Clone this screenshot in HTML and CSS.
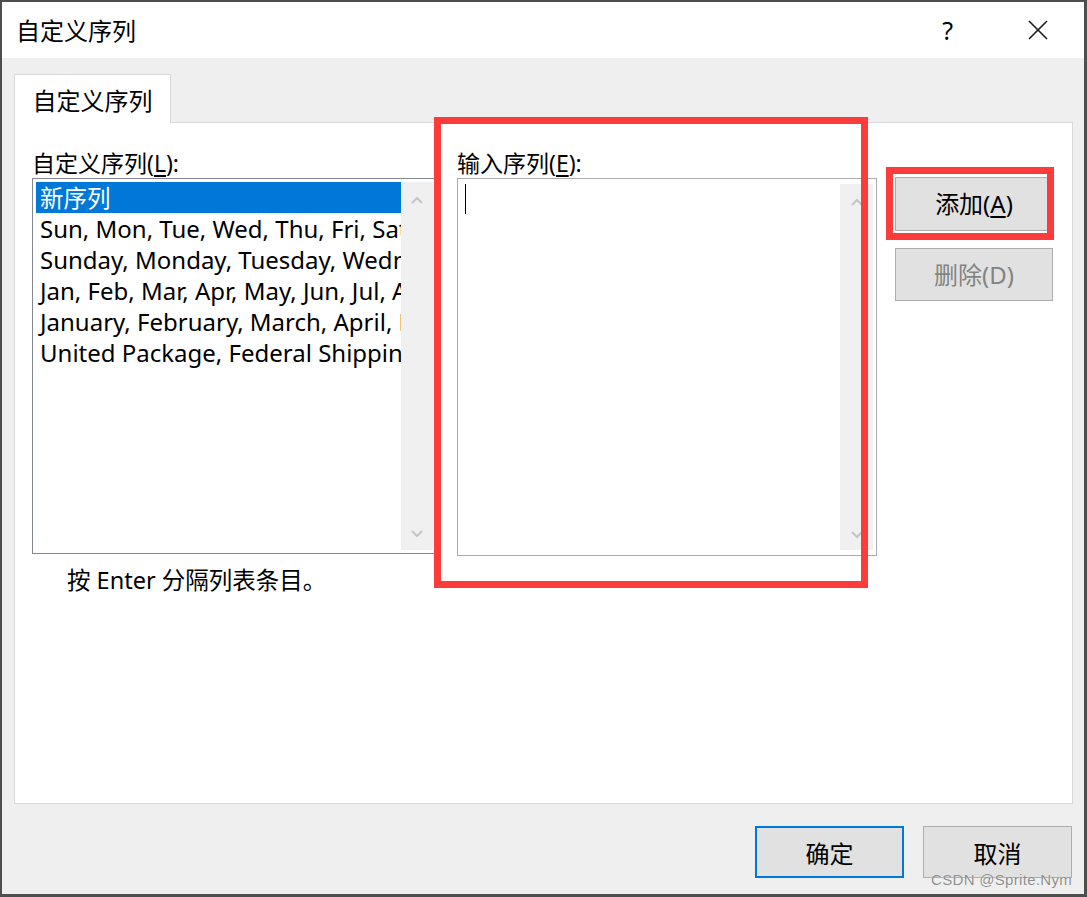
FILE: index.html
```html
<!DOCTYPE html>
<html lang="zh-CN">
<head>
<meta charset="utf-8">
<title>自定义序列</title>
<link rel="stylesheet" href="styles.css">
</head>
<body>
<div class="dialog">
  <div class="titlebar">
    <span class="title">自定义序列</span>
    <span class="help">?</span>
    <span class="close"><svg width="20" height="20" viewBox="0 0 20 20"><path d="M1 1 L19 19 M19 1 L1 19" stroke="#1a1a1a" stroke-width="1.6" fill="none"/></svg></span>
  </div>
  <div class="body">
    <div class="tabs"><div class="tab">自定义序列</div></div>
    <div class="panel">
      <div class="col col-list">
        <div class="label">自定义序列(<u>L</u>):</div>
        <div class="listbox">
          <div class="items">
            <div class="item selected">新序列</div>
            <div class="item">Sun, Mon, Tue, Wed, Thu, Fri, Sat</div>
            <div class="item">Sunday, Monday, Tuesday, Wednesday, Thursday</div>
            <div class="item">Jan, Feb, Mar, Apr, May, Jun, Jul, Aug</div>
            <div class="item">January, February, March, April, May</div>
            <div class="item">United Package, Federal Shipping</div>
          </div>
          <div class="scrollbar">
            <svg width="12" height="8" viewBox="0 0 12 8"><path d="M1 7 L6 2 L11 7" stroke="#c6c6c6" stroke-width="2.2" fill="none"/></svg>
            <svg width="12" height="8" viewBox="0 0 12 8"><path d="M1 1 L6 6 L11 1" stroke="#c6c6c6" stroke-width="2.2" fill="none"/></svg>
          </div>
        </div>
        <div class="hint">按 Enter 分隔列表条目。</div>
      </div>
      <div class="col col-input">
        <div class="label">输入序列(<u>E</u>):</div>
        <div class="textbox">
          <div class="text-area"><span class="caret"></span></div>
          <div class="scrollbar tb-scroll">
            <svg width="12" height="8" viewBox="0 0 12 8"><path d="M1 7 L6 2 L11 7" stroke="#c6c6c6" stroke-width="2.2" fill="none"/></svg>
            <svg width="12" height="8" viewBox="0 0 12 8"><path d="M1 1 L6 6 L11 1" stroke="#c6c6c6" stroke-width="2.2" fill="none"/></svg>
          </div>
        </div>
      </div>
      <div class="col col-buttons">
        <button class="btn side-btn">添加(<u>A</u>)</button>
        <button class="btn side-btn disabled">删除(D)</button>
      </div>
    </div>
    <div class="footer">
      <button class="btn foot-btn default">确定</button>
      <button class="btn foot-btn">取消</button>
    </div>
  </div>
  <div class="mark mark-input"></div>
  <div class="mark mark-add"></div>
  <div class="watermark">CSDN @Sprite.Nym</div>
</div>
</body>
</html>
```
FILE: styles.css
```css
* { box-sizing: border-box; }
html, body { margin: 0; padding: 0; }
body {
  width: 1087px;
  height: 897px;
  background: #4e4e4e;
  padding: 2px 3px 3px 2px;
  font-family: "Noto Sans", "Noto Sans CJK SC", sans-serif;
  color: #000;
  overflow: hidden;
}
.dialog {
  position: relative;
  width: 1082px;
  height: 892px;
  background: #efefef;
  display: flex;
  flex-direction: column;
}
.titlebar {
  height: 56px;
  background: #fff;
  display: flex;
  align-items: center;
  padding-left: 14px;
  font-family: "Noto Sans CJK SC", sans-serif;
}
.title { font-size: 24px; line-height: 30px; flex: 1; }
.help {
  font-family: "Noto Sans", sans-serif;
  font-size: 25px;
  line-height: 30px;
  margin-right: 75px;
}
.close { width: 20px; height: 20px; margin-right: 36px; display: block; }
.close svg { display: block; }
.body {
  flex: 1;
  display: flex;
  flex-direction: column;
  padding: 16px 11px 0 12px;
}
.tabs { display: flex; height: 48px; position: relative; z-index: 1; }
.tab {
  width: 157px;
  height: 49px;
  background: #fff;
  border: 1px solid #d9d9d9;
  border-bottom: none;
  font-family: "Noto Sans CJK SC", sans-serif;
  font-size: 24px;
  line-height: 50px;
  text-align: center;
}
.panel {
  height: 682px;
  background: #fff;
  border: 1px solid #d9d9d9;
  display: flex;
  padding: 25px 0 0 17px;
}
.col { display: flex; flex-direction: column; }
.label {
  font-family: "Noto Sans", "Noto Sans CJK SC", sans-serif;
  font-size: 23px;
  line-height: 30px;
  height: 30px;
}
.label u, .btn u { text-decoration-thickness: 1.5px; text-underline-offset: 3px; }
.col-list { width: 403px; }
.listbox {
  height: 376px;
  border: 1px solid #828790;
  padding: 3px 1px 3px 3px;
  display: flex;
}
.items {
  width: 365px;
  overflow: hidden;
  margin: -3px 0;
  padding: 3px 0;
}
.item {
  height: 31px;
  line-height: 31px;
  padding-left: 4px;
  font-size: 24px;
  white-space: nowrap;
  font-family: "Noto Sans", "Noto Sans CJK SC", sans-serif;
}
.item.selected { background: #0078d7; color: #fff; font-family: "Noto Sans CJK SC", sans-serif; font-size: 23.5px; }
.scrollbar {
  width: 32px;
  background: #f0f0f0;
  display: flex;
  flex-direction: column;
  align-items: center;
  justify-content: space-between;
  padding: 14px 0 12px;
}
.scrollbar svg { display: block; }
.hint {
  margin-top: 11px;
  padding-left: 35px;
  font-family: "Noto Sans", "Noto Sans CJK SC", sans-serif;
  font-size: 23.5px;
  line-height: 30px;
}
.col-input { width: 420px; margin-left: 22px; }
.textbox {
  height: 378px;
  border: 1px solid #ababab;
  padding: 5px 3px 5px 7px;
  display: flex;
}
.text-area { flex: 1; }
.caret { display: block; width: 1px; height: 30px; background: #000; }
.tb-scroll { width: 33px; padding: 14px 0 11px; }
.col-buttons { width: 158px; margin-left: 18px; padding-top: 29px; gap: 17px; }
.btn {
  background: #e1e1e1;
  border: 1px solid #adadad;
  font-family: "Noto Sans", "Noto Sans CJK SC", sans-serif;
  font-size: 24px;
  color: #000;
  padding: 0;
  margin: 0;
}
.side-btn { height: 54px; width: 158px; line-height: 50px; }
.side-btn.disabled { color: #838383; height: 53px; }
.footer {
  display: flex;
  justify-content: flex-end;
  gap: 19px;
  padding-top: 22px;
  padding-right: 1px;
}
.foot-btn { width: 149px; height: 52px; font-family: "Noto Sans CJK SC", sans-serif; }
.foot-btn.default { border: 2px solid #0078d7; }
.mark {
  position: absolute;
  border: 7px solid #fc3b3b;
  pointer-events: none;
}
.mark-input { left: 432px; top: 115px; width: 434px; height: 471px; }
.mark-add { left: 884px; top: 165px; width: 168px; height: 73px; }
.watermark {
  position: absolute;
  right: 12px;
  top: 869px;
  font-family: "Liberation Sans", sans-serif;
  font-size: 15px;
  color: rgba(120, 120, 120, 0.85);
  text-shadow: 0 0 1px #fff;
  letter-spacing: 0.3px;
}
```
